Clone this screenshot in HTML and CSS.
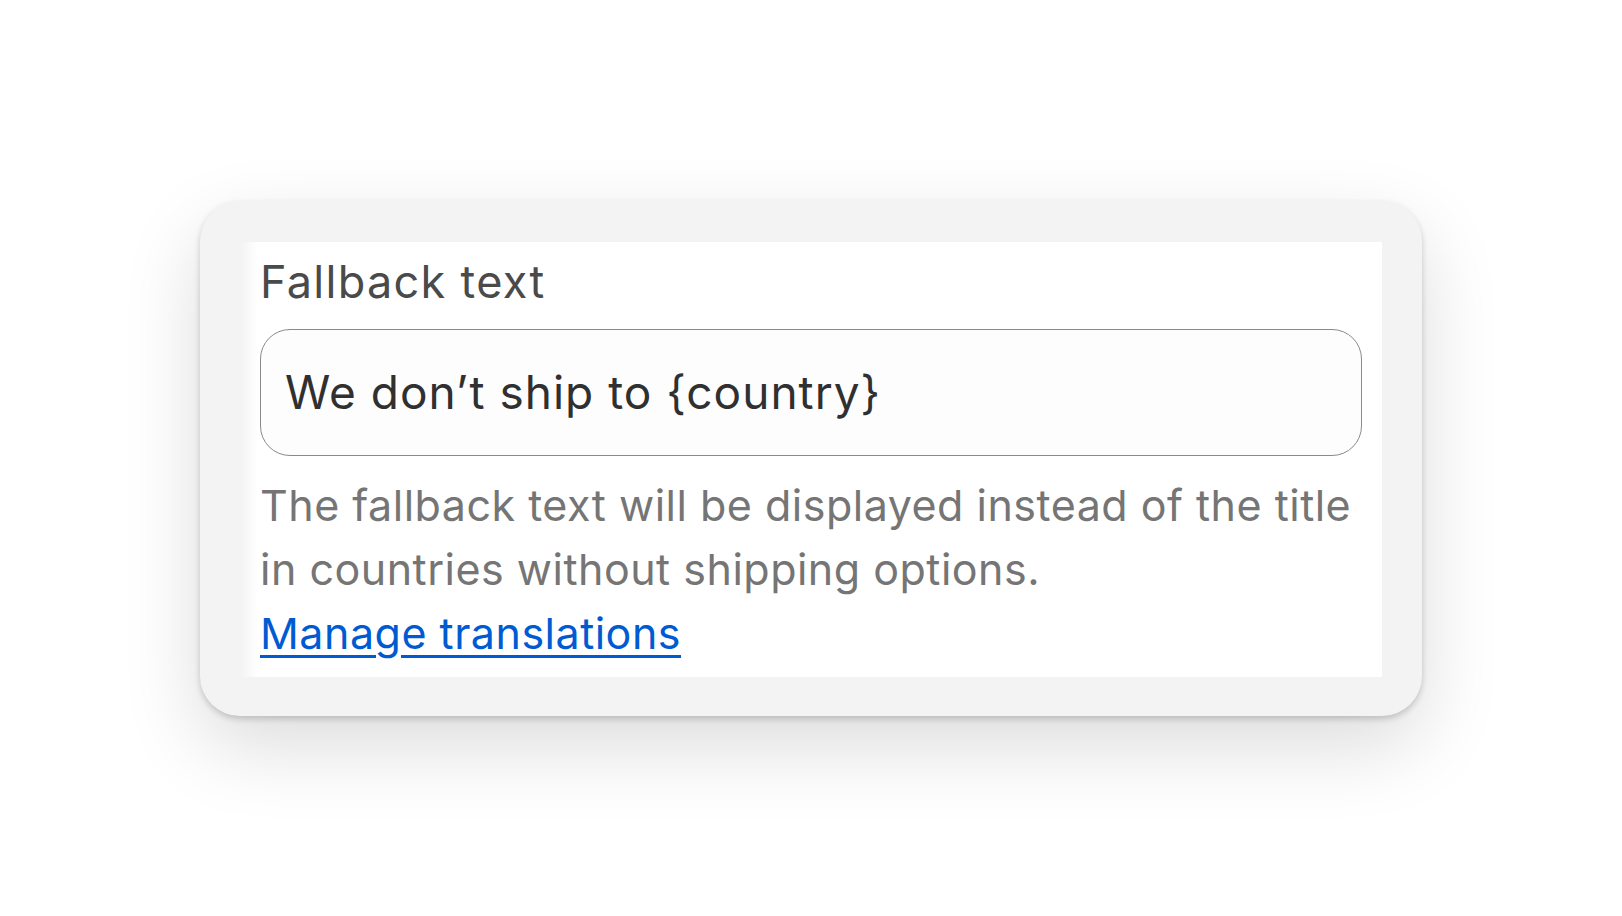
FILE: index.html
```html
<!DOCTYPE html>
<html>
<head>
  <title>Fallback text</title>
  <link rel="stylesheet" href="styles.css">
</head>
<body>
  <div class="card">
    <div class="panel">
      <label class="label" for="fallback">Fallback text</label>
      <div class="field">
        <input id="fallback" class="field-input" value="We don’t ship to {country}">
      </div>
      <p class="help">
        The fallback text will be displayed instead of the title
        <br>
        in countries without shipping options.
        <br>
        <a href="#">Manage translations</a>
      </p>
    </div>
  </div>
</body>
</html>
```

FILE: styles.css
```css
html, body {margin: 0; background: #fff;}
body {
  font-family: Inter, "Noto Sans", sans-serif;
  min-height: 100vh;
  display: flex;
  align-items: center;
  justify-content: center;
}

.card {
  width: 1222px;
  box-sizing: border-box;
  padding: 41px 40px 39px 40px;
  background: #f3f3f3;
  border-radius: 40px;
  box-shadow: 0 3px 6px rgba(0, 0, 0, 0.18), 0 30px 80px rgba(0, 0, 0, 0.14);
}

.panel {
  background: linear-gradient(to right, #f3f3f3, #fff 18px);
  padding: 13px 20px 12px 20px;
  display: flex;
  flex-direction: column;
}

.label {
  font-size: 45px;
  line-height: 54px;
  letter-spacing: 1.3px;
  color: #4a4a4a;
}

.field {margin-top: 20px;}

.field-input {
  display: block;
  width: 100%;
  box-sizing: border-box;
  height: 127px;
  padding: 0 24px;
  border: 1.5px solid #8a8a8a;
  border-radius: 30px;
  background: #fdfdfd;
  font-family: inherit;
  font-size: 46px;
  letter-spacing: 1px;
  color: #303030;
  outline: none;
}

.help {
  margin: 17px 0 0 0;
  font-size: 43px;
  line-height: 64px;
  letter-spacing: 0.5px;
  color: #757575;
}

.help a {
  color: #005bd3;
  text-decoration: underline;
  text-underline-offset: 6px;
  text-decoration-thickness: 3px;
}
```
